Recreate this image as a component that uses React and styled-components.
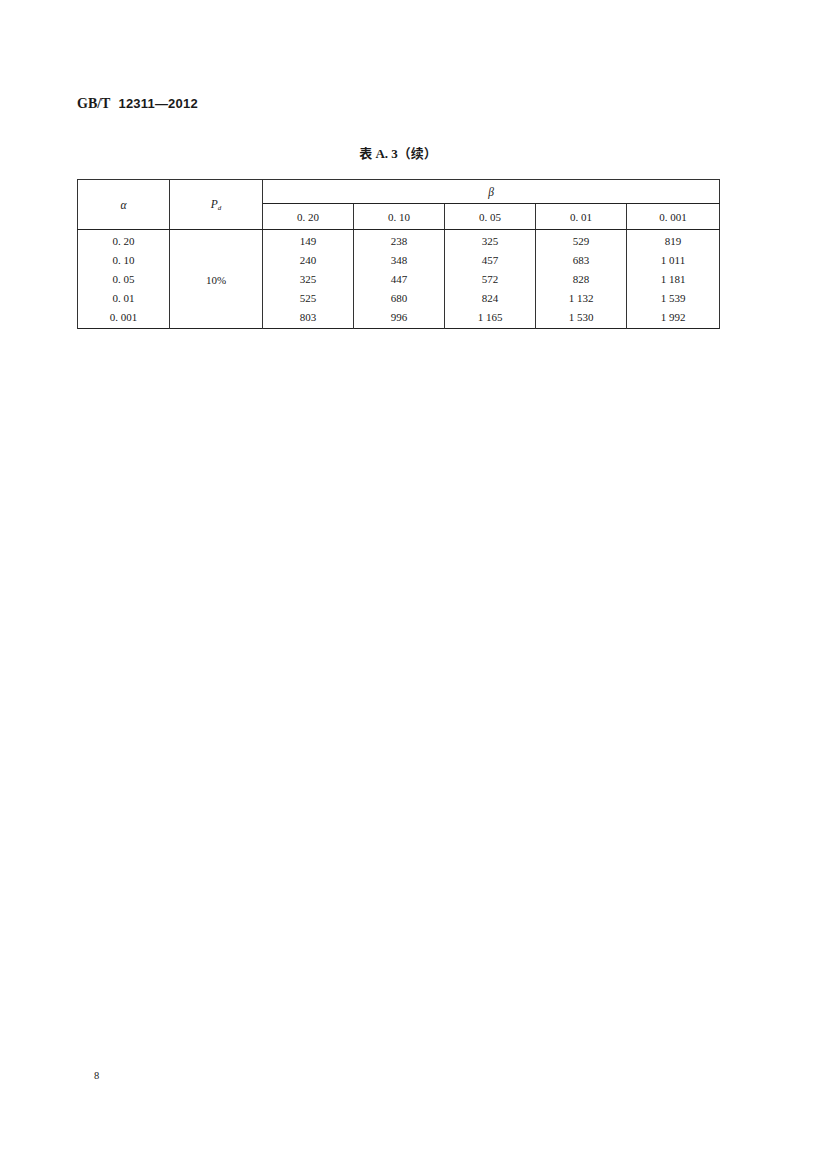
import React from 'react'
import styled, { createGlobalStyle } from 'styled-components'

const Global = createGlobalStyle`
  html, body { margin: 0; padding: 0; background: #fff; }
  body { font-family: "Liberation Serif", "Noto Sans CJK SC", serif; color: #1a1a1a; }
`

const Page = styled.div`
  width: 825px;
  height: 1152px;
  box-sizing: border-box;
  padding: 96px 0 70px 77px;
  display: flex;
  flex-direction: column;
`

const DocCode = styled.div`
  height: 16px;
  line-height: 16px;
  font-size: 13px;
  font-weight: bold;
  display: flex;
  gap: 8px;
  .std {
    font-family: "Liberation Serif", serif;
    font-size: 14px;
  }
  .num {
    font-family: "Liberation Sans", sans-serif;
    letter-spacing: 0.2px;
  }
`

const Caption = styled.div`
  width: 642px;
  margin-top: 34px;
  height: 16px;
  line-height: 16px;
  text-align: center;
  font-weight: bold;
  font-size: 13px;
  font-family: "Liberation Serif", "Noto Sans CJK SC", serif;
`

const Table = styled.table`
  margin-top: 17px;
  width: 642px;
  border-collapse: collapse;
  table-layout: fixed;
  border: 1.5px solid #222;
  font-size: 11px;
`

const Th = styled.th`
  font-weight: normal;
  height: ${p => p.$h || 24}px;
  padding: 0;
  border: 1px solid #333;
  text-align: center;
  vertical-align: middle;
  font-style: ${p => (p.$italic ? 'italic' : 'normal')};
  font-size: ${p => (p.$italic ? '11.5px' : '11px')};
  sub { font-size: 7px; vertical-align: -2px; }
`

const HeadRow = styled.tr`
  th { border-bottom-width: ${p => (p.$last ? '1.5px' : '1px')}; border-bottom-color: #222; }
`

const Tbody = styled.tbody`
  tr:first-child td { padding-top: 2px; }
  tr:last-child td { padding-bottom: 2px; }
`

const Td = styled.td`
  height: 18.8px;
  padding: 0;
  border-left: 1px solid #333;
  border-right: 1px solid #333;
  text-align: center;
  vertical-align: middle;
  line-height: 18px;
`

const PageNum = styled.div`
  margin-top: auto;
  margin-left: 17px;
  font-size: 10.5px;
  line-height: 12px;
`

const alphas = ['0. 20', '0. 10', '0. 05', '0. 01', '0. 001']
const betas = ['0. 20', '0. 10', '0. 05', '0. 01', '0. 001']
const rows = [
  ['149', '238', '325', '529', '819'],
  ['240', '348', '457', '683', '1 011'],
  ['325', '447', '572', '828', '1 181'],
  ['525', '680', '824', '1 132', '1 539'],
  ['803', '996', '1 165', '1 530', '1 992'],
]
const widths = [92, 93, 91, 91, 91, 91, 93]

export default function App() {
  return (
    <>
      <Global />
      <Page>
        <DocCode>
          <span className="std">GB/T</span>
          <span className="num">12311—2012</span>
        </DocCode>
        <Caption>表 A. 3（续）</Caption>
        <Table>
          <colgroup>
            {widths.map((w, i) => <col key={i} style={{ width: w }} />)}
          </colgroup>
          <thead>
            <HeadRow>
              <Th rowSpan={2} $italic>α</Th>
              <Th rowSpan={2} $italic>P<sub>d</sub></Th>
              <Th colSpan={5} $italic $h={23}>β</Th>
            </HeadRow>
            <HeadRow $last>
              {betas.map(b => <Th key={b} $h={25}>{b}</Th>)}
            </HeadRow>
          </thead>
          <Tbody>
            {rows.map((r, i) => (
              <tr key={i}>
                <Td>{alphas[i]}</Td>
                {i === 0 && <Td rowSpan={5}>10%</Td>}
                {r.map((v, j) => <Td key={j}>{v}</Td>)}
              </tr>
            ))}
          </Tbody>
        </Table>
        <PageNum>8</PageNum>
      </Page>
    </>
  )
}
